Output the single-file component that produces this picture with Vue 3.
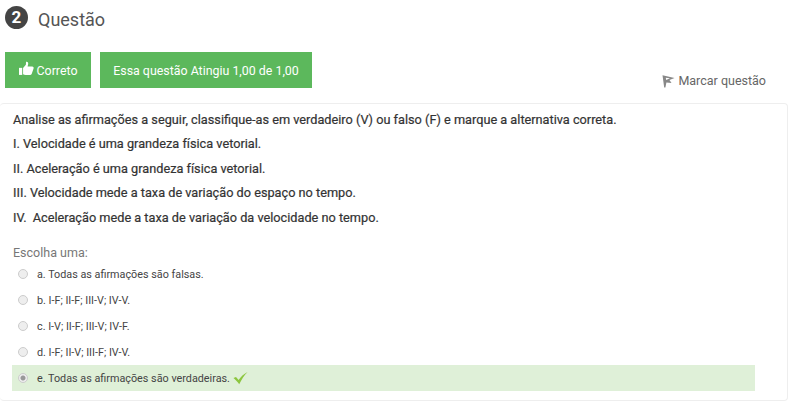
<template>
  <div class="page">
    <div class="head">
      <span class="num">2</span>
      <h2 class="title">Questão</h2>
    </div>

    <div class="status">
      <div class="badges">
        <span class="badge badge-ok">
          <svg class="thumb" width="15" height="15" viewBox="0 0 14 14">
            <path fill="#fff" d="M0 6.4h3V13H0z" />
            <path fill="#fff" d="M3.8 6.6 6.4 3.4 6.6.8c1.3-.3 2.1.7 2 1.9L8 5.1h4.3c1.1 0 1.7 1 1.3 1.9l-1.7 5c-.2.6-.7 1-1.3 1H6.2c-.9 0-1.6-.4-2.4-.7z" />
          </svg>
          Correto
        </span>
        <span class="badge">Essa questão Atingiu 1,00 de 1,00</span>
      </div>
      <a class="flag">
        <svg class="flag-icon" width="13" height="14" viewBox="0 0 13 14">
          <path fill="#888" d="M.5 1.2 12.5 4 7.5 6 9.5 9 4.4 8.4 3.4 13.6H2.2z" />
          <path fill="#fff" d="M3.8 3.8 8 4.2 4.2 6z" />
        </svg>
        Marcar questão
      </a>
    </div>

    <div class="card">
      <p v-for="line in lines" :key="line" class="line">{{ line }}</p>

      <div class="label">Escolha uma:</div>
      <div
        v-for="opt in options"
        :key="opt.text"
        class="option"
        :class="{ right: opt.right }"
      >
        <span class="radio" :class="{ on: opt.right }"></span>
        <span>{{ opt.text }}</span>
        <svg v-if="opt.right" class="check" width="15" height="14" viewBox="0 0 15 13">
          <path fill="#8cc63f" d="M.5 6.6 3 5.4l2.6 3.2C7.8 5.2 10.6 2.4 14.6.4 11.4 3.6 8.4 8 6.2 12.8 4.6 10.4 2.6 8.4.5 6.6z" />
        </svg>
      </div>
    </div>
  </div>
</template>

<script setup>
const lines = [
  'Analise as afirmações a seguir, classifique-as em verdadeiro (V) ou falso (F) e marque a alternativa correta.',
  'I. Velocidade é uma grandeza física vetorial.',
  'II. Aceleração é uma grandeza física vetorial.',
  'III. Velocidade mede a taxa de variação do espaço no tempo.',
  'IV.\u00a0 Aceleração mede a taxa de variação da velocidade no tempo.'
]

const options = [
  { text: 'a. Todas as afirmações são falsas.' },
  { text: 'b. I-F; II-F; III-V; IV-V.' },
  { text: 'c. I-V; II-F; III-V; IV-F.' },
  { text: 'd. I-F; II-V; III-F; IV-V.' },
  { text: 'e. Todas as afirmações são verdadeiras.', right: true }
]
</script>

<style>
html, body {
  background: #fff;
  overflow: hidden;
}
</style>

<style scoped>
.page {
  width: 793px;
  height: 402px;
  box-sizing: border-box;
  padding: 6px 5px 0 0;
  font-family: Roboto, "Liberation Sans", sans-serif;
  color: #333;
}

.head {
  display: flex;
  align-items: center;
  gap: 10px;
  padding-left: 5px;
  height: 29px;
}

.num {
  width: 23px;
  height: 23px;
  border-radius: 50%;
  background: #444;
  color: #fff;
  font-size: 17px;
  font-weight: 700;
  line-height: 23px;
  text-align: center;
  margin-top: -6px;
}

.title {
  margin: -3px 0 0;
  font-size: 18px;
  font-weight: 400;
  color: #555;
}

.status {
  display: flex;
  justify-content: space-between;
  margin-top: 17px;
  padding-left: 5px;
  padding-right: 22px;
}

.badges {
  display: flex;
  gap: 9px;
}

.badge {
  display: flex;
  align-items: center;
  gap: 3px;
  height: 36px;
  width: 212px;
  justify-content: center;
  background: #5cb85c;
  color: #fff;
  font-size: 12.4px;
  font-weight: 400;
}

.badge-ok {
  width: 86px;
}

.thumb {
  margin-top: -3px;
}

.flag {
  display: flex;
  align-items: center;
  gap: 3px;
  margin-top: 20px;
  height: 16px;
  font-size: 12.5px;
  color: #666;
}

.flag-icon {
  margin-top: 2px;
}

.card {
  margin-top: 15px;
  height: 298px;
  box-sizing: border-box;
  padding: 4px 12px 0 13px;
  border: 1px solid #eee;
  border-left: 0;
  border-radius: 4px;
}

.line {
  margin: 0;
  height: 24.4px;
  font-size: 12.72px;
  line-height: 24px;
  font-weight: 400;
  color: #333;
  -webkit-text-stroke: 0.2px #333;
}

.label {
  margin-top: 15.5px;
  font-size: 12.5px;
  line-height: 16px;
  color: #777;
}

.option {
  display: flex;
  align-items: center;
  height: 26px;
  width: 743px;
  margin-left: -1px;
  padding-left: 6px;
  box-sizing: border-box;
  font-size: 10.8px;
  color: #444;
}

.radio {
  width: 10px;
  height: 10px;
  margin-right: 9px;
  box-sizing: border-box;
  border-radius: 50%;
  background: #eee;
  border: 1px solid #ccc;
}

.radio.on {
  background: radial-gradient(circle, #999 0 2px, #eee 3px);
}

.right {
  background: #dff0d8;
}

.check {
  margin-left: 3px;
}
</style>
